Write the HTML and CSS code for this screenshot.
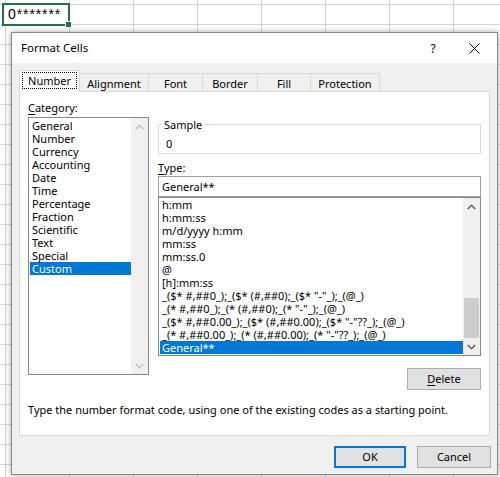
FILE: index.html
```html
<!DOCTYPE html>
<html lang="en">

<head>
    <meta charset="UTF-8">
    <meta name="viewport" content="width=device-width, initial-scale=1.0">
    <title>Format Cells</title>
    <link rel="stylesheet" href="styles.css">
</head>

<body>
    <div class="cell-active">0*******</div>

    <div class="dialog">
        <div class="titlebar">
            <span class="title">Format Cells</span>
            <span class="title-help">?</span>
            <span class="title-close">
                <svg width="11" height="11" viewBox="0 0 11 11">
                    <path d="M0.5 0.5 L10.5 10.5 M10.5 0.5 L0.5 10.5" stroke="#000" stroke-width="1" fill="none"/>
                </svg>
            </span>
        </div>

        <div class="tabs">
            <div class="tab tab-number active"><span class="focus">Number</span></div>
            <div class="tab tab-alignment">Alignment</div>
            <div class="tab tab-font">Font</div>
            <div class="tab tab-border">Border</div>
            <div class="tab tab-fill">Fill</div>
            <div class="tab tab-protection">Protection</div>
        </div>

        <div class="panel">
            <div class="panel-main">
                <div class="col-left">
                    <div class="field-label"><u>C</u>ategory:</div>
                    <div class="listbox category-list">
                        <ul class="items">
                            <li>General</li>
                            <li>Number</li>
                            <li>Currency</li>
                            <li>Accounting</li>
                            <li>Date</li>
                            <li>Time</li>
                            <li>Percentage</li>
                            <li>Fraction</li>
                            <li>Scientific</li>
                            <li>Text</li>
                            <li>Special</li>
                            <li class="selected">Custom</li>
                        </ul>
                        <div class="scrollbar disabled">
                            <div class="sb-btn">
                                <svg width="9" height="6" viewBox="0 0 9 6"><polyline points="0.8,5 4.5,1.3 8.2,5" fill="none" stroke="#c2c2c2" stroke-width="1.6"/></svg>
                            </div>
                            <div class="sb-track"></div>
                            <div class="sb-btn">
                                <svg width="9" height="6" viewBox="0 0 9 6"><polyline points="0.8,1 4.5,4.7 8.2,1" fill="none" stroke="#c2c2c2" stroke-width="1.6"/></svg>
                            </div>
                        </div>
                    </div>
                </div>

                <div class="col-right">
                    <fieldset class="sample">
                        <legend>Sample</legend>
                        <div class="sample-value">0</div>
                    </fieldset>

                    <div class="field-label type-label"><u>T</u>ype:</div>
                    <div class="type-input">General**</div>

                    <div class="listbox type-list">
                        <ul class="items">
                            <li>h:mm</li>
                            <li>h:mm:ss</li>
                            <li>m/d/yyyy h:mm</li>
                            <li>mm:ss</li>
                            <li>mm:ss.0</li>
                            <li>@</li>
                            <li>[h]:mm:ss</li>
                            <li>_($* #,##0_);_($* (#,##0);_($* "-"_);_(@_)</li>
                            <li>_(* #,##0_);_(* (#,##0);_(* "-"_);_(@_)</li>
                            <li>_($* #,##0.00_);_($* (#,##0.00);_($* "-"??_);_(@_)</li>
                            <li>_(* #,##0.00_);_(* (#,##0.00);_(* "-"??_);_(@_)</li>
                            <li class="selected">General**</li>
                        </ul>
                        <div class="scrollbar">
                            <div class="sb-btn">
                                <svg width="9" height="6" viewBox="0 0 9 6"><polyline points="0.8,5 4.5,1.3 8.2,5" fill="none" stroke="#606060" stroke-width="1.6"/></svg>
                            </div>
                            <div class="sb-track"><div class="sb-thumb"></div></div>
                            <div class="sb-btn">
                                <svg width="9" height="6" viewBox="0 0 9 6"><polyline points="0.8,1 4.5,4.7 8.2,1" fill="none" stroke="#606060" stroke-width="1.6"/></svg>
                            </div>
                        </div>
                    </div>

                    <button class="btn btn-delete"><u>D</u>elete</button>
                </div>
            </div>

            <p class="help-text">Type the number format code, using one of the existing codes as a starting point.</p>
        </div>

        <div class="dialog-buttons">
            <button class="btn btn-ok">OK</button>
            <button class="btn btn-cancel">Cancel</button>
        </div>
    </div>
</body>

</html>
```

FILE: styles.css
```css
html,
body {
    height: 100%;
}

body {
    margin: 0;
    padding: 0;
    overflow: hidden;
    background-color: #fff;
    background-image:
        linear-gradient(to right, #d4d4d4 1px, transparent 1px),
        linear-gradient(to bottom, #d4d4d4 1px, transparent 1px);
    background-size: 64px 20px;
    background-position: 5px 4px;
    font-family: 'Noto Sans', 'Open Sans', sans-serif;
    font-size: 11px;
    color: #000;
}

/* active spreadsheet cell */
.cell-active {
    position: relative;
    box-sizing: border-box;
    width: 68px;
    height: 23px;
    margin: 3px 0 0 2px;
    padding-left: 4px;
    border: 2px solid #217346;
    background: #fff;
    font-family: 'Liberation Sans', Arial, sans-serif;
    font-size: 14px;
    letter-spacing: 0.9px;
    line-height: 19px;
}

.cell-active::after {
    content: '';
    position: absolute;
    right: -4px;
    bottom: -4px;
    width: 5px;
    height: 5px;
    background: #217346;
    border: 1px solid #fff;
}

/* dialog window */
.dialog {
    position: absolute;
    left: 11px;
    top: 32px;
    width: 487px;
    height: 443px;
    box-sizing: border-box;
    background: #f0f0f0;
    border: 1px solid #8a8a8a;
    box-shadow: 0 0 6px rgba(0, 0, 0, 0.35);
    display: flex;
    flex-direction: column;
}

.titlebar {
    height: 30px;
    background: #fff;
    display: flex;
    align-items: center;
    padding-left: 9px;
}

.title {
    flex: 1;
    font-size: 11.5px;
    line-height: 16px;
}

.title-help {
    width: 20px;
    text-align: center;
    font-size: 12px;
    margin-right: 26px;
}

.title-close {
    width: 11px;
    height: 11px;
    margin-right: 17px;
    display: flex;
}

/* tabs */
.tabs {
    display: flex;
    align-items: flex-end;
    height: 21px;
    margin: 7px 0 0 7px;
    position: relative;
    z-index: 1;
}

.tab {
    box-sizing: border-box;
    height: 18px;
    margin-left: -1px;
    border: 1px solid #d9d9d9;
    border-bottom: none;
    background: #f0f0f0;
    display: flex;
    align-items: center;
    justify-content: center;
    line-height: 15px;
    padding-top: 1px;
}

.tab.active {
    height: 22px;
    margin-left: 0;
    margin-bottom: -1px;
    background: #fff;
    padding-top: 0;
    padding-bottom: 3px;
}

.tab .focus {
    outline: 1px dotted #000;
    outline-offset: 0;
    padding: 0 5px;
}

.tab-number { width: 61px; }
.tab-alignment { width: 70px; }
.tab-font { width: 55px; }
.tab-border { width: 56px; }
.tab-fill { width: 54px; }
.tab-protection { width: 70px; }

/* tab panel */
.panel {
    box-sizing: border-box;
    height: 345px;
    margin: 0 7px;
    background: #fff;
    border: 1px solid #d9d9d9;
}

.panel-main {
    display: flex;
    gap: 9px;
    padding: 8px 8px 0;
    align-items: flex-start;
}

.col-left {
    width: 122px;
}

.col-right {
    width: 323px;
    display: flex;
    flex-direction: column;
}

.field-label {
    line-height: 16px;
    height: 16px;
}

.field-label u {
    text-decoration-thickness: 1px;
    text-underline-offset: 2px;
}

/* list boxes */
.listbox {
    box-sizing: border-box;
    border: 1px solid #828790;
    display: flex;
    background: #fff;
}

.category-list {
    height: 258px;
    margin-top: 1px;
}

.items {
    flex: 1;
    list-style: none;
    margin: 0;
    padding: 1px 0 0 1px;
    line-height: 13px;
    white-space: nowrap;
    overflow: hidden;
}

.items li {
    padding-left: 2px;
    height: 13px;
}

.items li.selected {
    background: #0078d7;
    color: #fff;
}

.scrollbar {
    width: 17px;
    background: #f0f0f0;
    display: flex;
    flex-direction: column;
}

.sb-btn {
    height: 17px;
    display: flex;
    align-items: center;
    justify-content: center;
}

.sb-track {
    flex: 1;
    display: flex;
    flex-direction: column;
    justify-content: flex-end;
}

.sb-thumb {
    height: 40px;
    margin: 0 1px;
    background: #cdcdcd;
}

/* sample box */
.sample {
    box-sizing: border-box;
    width: 323px;
    min-width: 0;
    margin: 17px 0 0;
    padding: 0 0 2px 3px;
    border: 1px solid #dcdcdc;
}

.sample legend {
    padding: 0 2px;
    line-height: 15px;
}

.sample-value {
    padding: 4px 0 0 4px;
    line-height: 15px;
}

.type-label {
    margin-top: 6px;
}

.type-input {
    box-sizing: border-box;
    height: 21px;
    border: 1px solid #a0a0a0;
    padding-left: 3px;
    line-height: 19px;
}

.type-list {
    height: 159px;
    margin-top: 0;
}

.type-list .items {
    padding-top: 0;
}

/* buttons */
.btn {
    box-sizing: border-box;
    height: 22px;
    padding: 0;
    border: 1px solid #adadad;
    background: #e1e1e1;
    font-family: inherit;
    font-size: 11px;
    color: #000;
    line-height: 18px;
}

.btn u {
    text-underline-offset: 2px;
}

.btn-delete {
    align-self: flex-end;
    width: 74px;
    margin-top: 12px;
}

.help-text {
    margin: 12px 0 0;
    padding-left: 8px;
    line-height: 16px;
}

.dialog-buttons {
    display: flex;
    justify-content: flex-end;
    gap: 11px;
    margin-top: 10px;
    padding-right: 6px;
}

.btn-ok {
    width: 72px;
    border: 2px solid #0078d7;
}

.btn-cancel {
    width: 74px;
}
```
